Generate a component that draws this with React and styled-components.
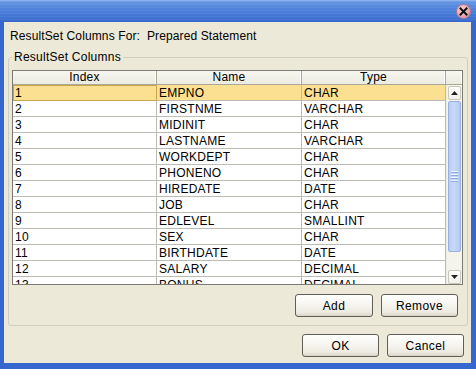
import React from "react";
import styled, { createGlobalStyle } from "styled-components";

const Global = createGlobalStyle`
  html, body { margin: 0; padding: 0; background: #ece9d8; }
  body { font-family: "Liberation Sans", Arial, sans-serif; font-size: 12px; color: #000; }
`;

const Frame = styled.div`
  width: 476px;
  height: 369px;
  display: flex;
  flex-direction: column;
  background: #3567cf;
  overflow: hidden;
`;

const TitleBar = styled.div`
  height: 22px;
  flex: none;
  display: flex;
  align-items: center;
  justify-content: flex-end;
  padding-right: 5px;
  box-sizing: border-box;
  background:
    repeating-linear-gradient(180deg, rgba(255,255,255,0.06) 0 1px, rgba(0,0,0,0) 1px 3px),
    linear-gradient(180deg, #6a98e4 0%, #5285dc 30%, #4377d5 70%, #3668cc 100%);
  border-top: 1px solid #8cb2f0;
`;

const CloseButton = styled.div`
  width: 15px;
  height: 15px;
  border-radius: 50%;
  background: radial-gradient(circle at 40% 35%, #f7d6da 0%, #e9a9b2 55%, #cf8290 100%);
  border: 1px solid #b87a86;
  box-sizing: border-box;
  display: flex;
  align-items: center;
  justify-content: center;
`;

const Body = styled.div`
  flex: 1;
  background: #ece9d8;
  margin: 0 5px 6px 4px;
  padding: 0 3px 0 4px;
  display: flex;
  flex-direction: column;
`;

const Caption = styled.div`
  margin: 7px 0 0 2px;
  height: 14px;
  line-height: 14px;
  letter-spacing: 0.12px;
  white-space: pre;
`;

const GroupBox = styled.fieldset`
  margin: 7px 0 0 0;
  padding: 0 4px 8px 3px;
  min-width: 0;
  border: 1px solid #d0cfbf;
  border-radius: 3px;
  display: flex;
  flex-direction: column;
`;

const Legend = styled.legend`
  padding: 0 2px;
  height: 14px;
  line-height: 14px;
  letter-spacing: 0.25px;
`;

const TableFrame = styled.div`
  margin-top: 6px;
  height: 215px;
  box-sizing: border-box;
  border: 1px solid #7b7b73;
  display: flex;
  flex-direction: column;
  background: #fff;
`;

const HeaderRow = styled.div`
  display: grid;
  grid-template-columns: 144px 145px 144px 16px;
  height: 14px;
  flex: none;
`;

const HeaderCell = styled.div`
  background: linear-gradient(180deg, #f7f6f0 0%, #ecebe1 100%);
  border-right: 1px solid #aca899;
  border-bottom: 1px solid #aca899;
  box-shadow: inset -1px 0 0 #fff;
  text-align: center;
  line-height: 13px;
  letter-spacing: 0.25px;
  &:last-child { border-right: none; }
`;

const BodyArea = styled.div`
  flex: 1;
  display: flex;
  min-height: 0;
`;

const Viewport = styled.div`
  flex: 1;
  overflow: hidden;
`;

const Row = styled.div`
  display: grid;
  grid-template-columns: 144px 145px 144px;
  height: 16px;
  background: ${(p) => (p.$selected ? "#fbe091" : "#fff")};
`;

const Cell = styled.div`
  box-sizing: border-box;
  border-right: 1px solid #bcbcb4;
  border-bottom: 1px solid #bcbcb4;
  padding-left: 2px;
  line-height: 16px;
  letter-spacing: 0.25px;
  white-space: nowrap;
  overflow: hidden;
  outline: ${(p) => (p.$focus ? "1px solid #c9a64c" : "none")};
  outline-offset: -1px;
`;

const ScrollBar = styled.div`
  width: 16px;
  flex: none;
  background: #f4f3ec;
  display: flex;
  flex-direction: column;
  padding: 1px 1px 0 1px;
  box-sizing: border-box;
  border-left: 1px solid #ecebe4;
`;

const ArrowButton = styled.div`
  height: 14px;
  flex: none;
  box-sizing: border-box;
  border: 1px solid #c9c7ba;
  border-radius: 2px;
  background: linear-gradient(180deg, #ffffff 0%, #f1f0ea 100%);
  display: flex;
  align-items: center;
  justify-content: center;
`;

const Thumb = styled.div`
  height: ${(p) => p.$h}px;
  flex: none;
  margin-top: 1px;
  box-sizing: border-box;
  border: 1px solid #98b1e5;
  border-radius: 2px;
  background: linear-gradient(90deg, #b7ccf4 0%, #c9d9fa 40%, #b6caf2 100%);
  display: flex;
  flex-direction: column;
  align-items: center;
  justify-content: center;
  gap: 1px;
`;

const Grip = styled.div`
  width: 7px;
  height: 1px;
  background: #eef3fe;
  box-shadow: 0 1px 0 #8caae4;
  margin-bottom: 1px;
`;

const Track = styled.div`
  flex: 1;
`;

const ButtonRow = styled.div`
  display: flex;
  justify-content: flex-end;
  gap: 8px;
  margin-top: 9px;
  padding-right: ${(p) => p.$right}px;
`;

const Button = styled.button`
  width: ${(p) => p.$w || 77}px;
  height: 23px;
  box-sizing: border-box;
  border: 1px solid #5f5f58;
  border-radius: 3px;
  background: linear-gradient(180deg, #ffffff 0%, #f6f5f0 45%, #ebe9df 85%, #d6d3c6 100%);
  font-family: "Liberation Sans", Arial, sans-serif;
  font-size: 12px;
  font-weight: 400;
  letter-spacing: 0.4px;
  color: #000;
  padding: 0;
`;

const Footer = styled(ButtonRow)`
  margin-top: 8px;
`;

const rows = [
  ["1", "EMPNO", "CHAR"],
  ["2", "FIRSTNME", "VARCHAR"],
  ["3", "MIDINIT", "CHAR"],
  ["4", "LASTNAME", "VARCHAR"],
  ["5", "WORKDEPT", "CHAR"],
  ["6", "PHONENO", "CHAR"],
  ["7", "HIREDATE", "DATE"],
  ["8", "JOB", "CHAR"],
  ["9", "EDLEVEL", "SMALLINT"],
  ["10", "SEX", "CHAR"],
  ["11", "BIRTHDATE", "DATE"],
  ["12", "SALARY", "DECIMAL"],
  ["13", "BONUS", "DECIMAL"],
];

const Arrow = ({ up }) => (
  <svg width="7" height="4" viewBox="0 0 7 4">
    <path d={up ? "M3.5 0 L7 4 L0 4 Z" : "M0 0 L7 0 L3.5 4 Z"} fill="#222" />
  </svg>
);

export default function App() {
  return (
    <>
      <Global />
      <Frame>
        <TitleBar>
          <CloseButton>
            <svg width="9" height="9" viewBox="0 0 9 9">
              <path d="M1.5 1.5 L7.5 7.5 M7.5 1.5 L1.5 7.5" stroke="#111" strokeWidth="2" strokeLinecap="square" />
            </svg>
          </CloseButton>
        </TitleBar>
        <Body>
          <Caption>{"ResultSet Columns For:  Prepared Statement"}</Caption>
          <GroupBox>
            <Legend>ResultSet Columns</Legend>
            <TableFrame>
              <HeaderRow>
                <HeaderCell>Index</HeaderCell>
                <HeaderCell>Name</HeaderCell>
                <HeaderCell>Type</HeaderCell>
                <HeaderCell />
              </HeaderRow>
              <BodyArea>
                <Viewport>
                  {rows.map((r, i) => (
                    <Row key={r[0]} $selected={i === 0}>
                      <Cell $focus={i === 0}>{r[0]}</Cell>
                      <Cell>{r[1]}</Cell>
                      <Cell>{r[2]}</Cell>
                    </Row>
                  ))}
                </Viewport>
                <ScrollBar>
                  <ArrowButton><Arrow up /></ArrowButton>
                  <Thumb $h={151}>
                    <Grip /><Grip /><Grip /><Grip />
                  </Thumb>
                  <Track />
                  <ArrowButton><Arrow /></ArrowButton>
                </ScrollBar>
              </BodyArea>
            </TableFrame>
            <ButtonRow $right={5}>
              <Button $w={78}>Add</Button>
              <Button>Remove</Button>
            </ButtonRow>
          </GroupBox>
          <Footer $right={4}>
            <Button>OK</Button>
            <Button>Cancel</Button>
          </Footer>
        </Body>
      </Frame>
    </>
  );
}
